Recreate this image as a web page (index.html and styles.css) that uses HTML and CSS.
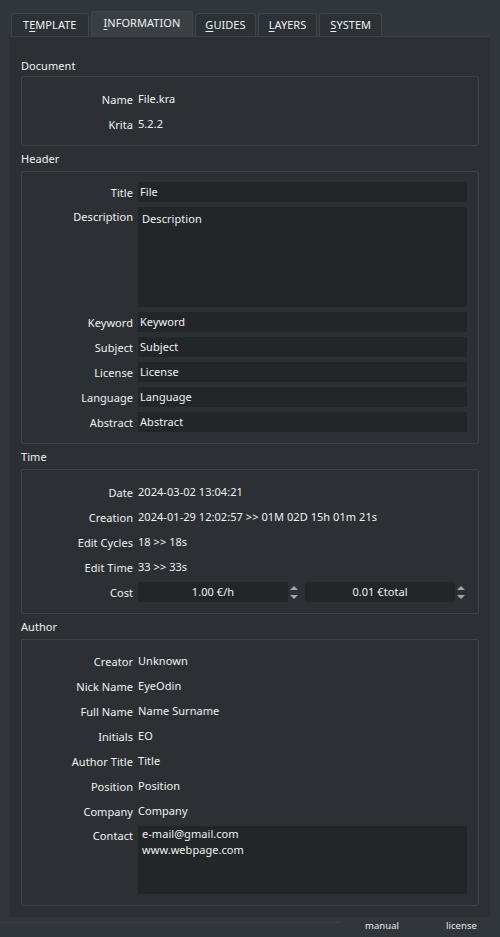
FILE: index.html
```html
<!DOCTYPE html>
<html>
<head>
<meta charset="utf-8">
<link rel="stylesheet" href="styles.css">
</head>
<body>
<div class="window">
  <div class="tabbar">
    <div class="tab">T<u>E</u>MPLATE</div>
    <div class="tab active"><u>I</u>NFORMATION</div>
    <div class="tab narrow"><u>G</u>UIDES</div>
    <div class="tab"><u>L</u>AYERS</div>
    <div class="tab"><u>S</u>YSTEM</div>
  </div>
  <div class="pane">
    <section class="group">
      <div class="gtitle first">Document</div>
      <div class="gbox doc">
        <div class="row"><span class="lbl">Name</span><span class="val">File.kra</span></div>
        <div class="row"><span class="lbl">Krita</span><span class="val">5.2.2</span></div>
      </div>
    </section>
    <section class="group">
      <div class="gtitle">Header</div>
      <div class="gbox header">
        <div class="row"><span class="lbl">Title</span><span class="field">File</span></div>
        <div class="row tall"><span class="lbl">Description</span><span class="area desc">Description</span></div>
        <div class="row"><span class="lbl">Keyword</span><span class="field">Keyword</span></div>
        <div class="row"><span class="lbl">Subject</span><span class="field">Subject</span></div>
        <div class="row"><span class="lbl">License</span><span class="field">License</span></div>
        <div class="row"><span class="lbl">Language</span><span class="field">Language</span></div>
        <div class="row"><span class="lbl">Abstract</span><span class="field">Abstract</span></div>
      </div>
    </section>
    <section class="group">
      <div class="gtitle">Time</div>
      <div class="gbox time">
        <div class="row"><span class="lbl">Date</span><span class="val">2024-03-02 13:04:21</span></div>
        <div class="row"><span class="lbl">Creation</span><span class="val">2024-01-29 12:02:57 &gt;&gt; 01M 02D 15h 01m 21s</span></div>
        <div class="row"><span class="lbl">Edit Cycles</span><span class="val">18 &gt;&gt; 18s</span></div>
        <div class="row"><span class="lbl">Edit Time</span><span class="val">33 &gt;&gt; 33s</span></div>
        <div class="row"><span class="lbl">Cost</span>
          <span class="spins">
            <span class="spin"><span class="spinfield">1.00 €/h</span><span class="arrows"><i class="up"></i><i class="down"></i></span></span>
            <span class="spin"><span class="spinfield">0.01 €total</span><span class="arrows"><i class="up"></i><i class="down"></i></span></span>
          </span>
        </div>
      </div>
    </section>
    <section class="group">
      <div class="gtitle">Author</div>
      <div class="gbox author">
        <div class="row"><span class="lbl">Creator</span><span class="val">Unknown</span></div>
        <div class="row"><span class="lbl">Nick Name</span><span class="val">EyeOdin</span></div>
        <div class="row"><span class="lbl">Full Name</span><span class="val">Name Surname</span></div>
        <div class="row"><span class="lbl">Initials</span><span class="val">EO</span></div>
        <div class="row"><span class="lbl">Author Title</span><span class="val">Title</span></div>
        <div class="row"><span class="lbl">Position</span><span class="val">Position</span></div>
        <div class="row"><span class="lbl">Company</span><span class="val">Company</span></div>
        <div class="row tall"><span class="lbl">Contact</span><span class="area contact">e-mail@gmail.com<br>www.webpage.com</span></div>
      </div>
    </section>
  </div>
  <div class="footer">
    <div class="fline"></div>
    <span class="flink manual">manual</span>
    <span class="flink license">license</span>
  </div>
</div>
</body>
</html>
```
FILE: styles.css
```css
html, body {
  margin: 0;
  padding: 0;
  background: #31363b;
}
body {
  width: 500px;
  height: 937px;
  overflow: hidden;
  font-family: "Noto Sans", "Open Sans", sans-serif;
  font-size: 11px;
  letter-spacing: 0.05px;
  color: #eff0f1;
}
.window {
  padding: 0 10px 0 10px;
}
.tabbar {
  display: flex;
  align-items: flex-end;
  gap: 2px;
  padding-top: 11px;
  padding-left: 1px;
  height: 25px;
  border-bottom: 1px solid #3b4045;
  width: 479px;
}
.tab {
  height: 22px;
  line-height: 22px;
  padding: 0 10px;
  background: #2c3135;
  border: 1px solid #40454a;
  border-bottom: none;
  border-radius: 3px 3px 0 0;
}
.tab:first-child {
  padding: 0 11px;
}
.tab.narrow {
  padding: 0 9px;
}
.tab.active {
  height: 24px;
  line-height: 22px;
  background: #3a3f44;
  padding: 0 12px;
}
.tab u {
  text-decoration-thickness: 1px;
  text-underline-offset: 2px;
}
.pane {
  background: #2c3034;
  width: 458px;
  padding: 19px 11px 10px 11px;
  height: 851px;
}
.gtitle {
  height: 25px;
  line-height: 25px;
}
.gtitle.first {
  height: 20px;
  line-height: 20px;
}
.gbox {
  border: 1px solid #3e4347;
  border-radius: 2px;
  padding: 11px 11px 11px 0;
  display: flex;
  flex-direction: column;
  gap: 5px;
}
.gbox.doc { padding-top: 12px; }
.gbox.header { padding-top: 10px; }
.gbox.time { padding-top: 12px; }
.gbox.author { padding-top: 11px; }
.row {
  display: flex;
  align-items: center;
  height: 20px;
}
.row.tall {
  height: auto;
  align-items: flex-start;
}
.row.tall .lbl {
  line-height: 20px;
}
.lbl {
  width: 111px;
  flex: none;
  text-align: right;
  margin-right: 5px;
}
.val {
  flex: 1;
  line-height: 20px;
}
.field {
  flex: 1;
  height: 20px;
  line-height: 20px;
  background: #232629;
  padding-left: 2px;
}
.area {
  flex: 1;
  background: #232629;
  box-sizing: border-box;
  padding: 3px 4px;
  line-height: 16px;
}
.area.desc {
  height: 100px;
  padding-top: 4px;
}
.area.contact {
  height: 68px;
  padding-top: 0;
}
.spins {
  flex: 1;
  display: flex;
  gap: 5px;
}
.spin {
  flex: 1;
  display: flex;
  height: 20px;
}
.spinfield {
  flex: 1;
  background: #232629;
  text-align: center;
  line-height: 20px;
}
.arrows {
  width: 12px;
  display: flex;
  flex-direction: column;
  align-items: center;
  justify-content: center;
  gap: 5px;
}
.arrows i {
  display: block;
  width: 0;
  height: 0;
  border-left: 4px solid transparent;
  border-right: 4px solid transparent;
}
.arrows .up {
  border-bottom: 4px solid #a3a6a9;
}
.arrows .down {
  border-top: 4px solid #a3a6a9;
}
.footer {
  position: relative;
  height: 20px;
  margin: 0 -10px;
}
.fline {
  position: absolute;
  left: 0;
  top: 5px;
  width: 340px;
  height: 1px;
  background: #3a3f44;
}
.flink {
  position: absolute;
  top: 2px;
  font-size: 9.5px;
  line-height: 14px;
  color: #e8eaec;
}
.manual { left: 365px; }
.license { left: 446px; }
```
